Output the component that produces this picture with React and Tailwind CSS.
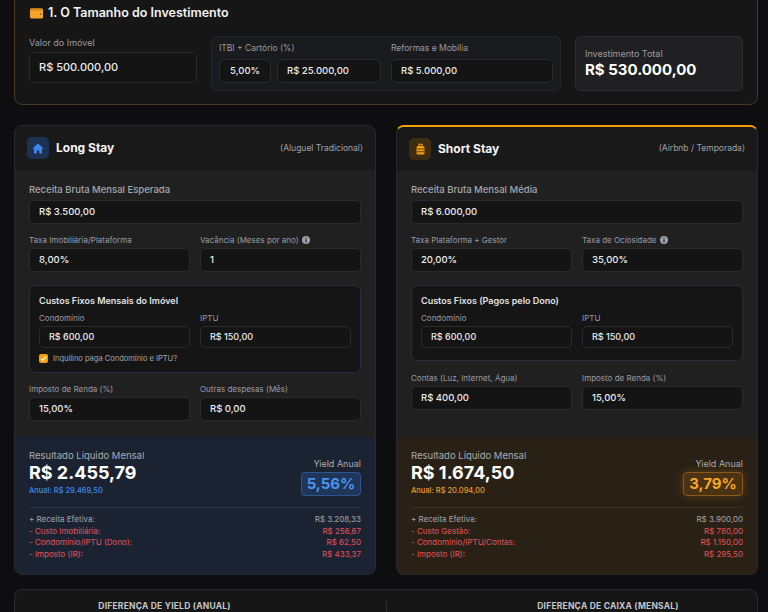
import React from "react";

function WalletIcon() {
  return (
    <svg width="13" height="11" viewBox="0 0 13 11">
      <rect x="0" y="0.5" width="13" height="10" rx="1.6" fill="#f4a42c" />
      <rect x="0" y="0.5" width="13" height="2.2" rx="1.1" fill="#e08c16" />
      <circle cx="10.6" cy="6.2" r="0.8" fill="#7a4506" />
    </svg>
  );
}

function HouseIcon() {
  return (
    <svg width="12" height="11" viewBox="0 0 12 11">
      <path d="M6 0.6 L11.6 5.6 H10 V10.6 H7.3 V7.4 H4.7 V10.6 H2 V5.6 H0.4 Z" fill="#3b86f0" />
    </svg>
  );
}

function SuitcaseIcon() {
  return (
    <svg width="9" height="12" viewBox="0 0 9 12">
      <path d="M3 3.2 V1.2 H6 V3.2" fill="none" stroke="#f59e0b" strokeWidth="1.1" />
      <rect x="0.5" y="3" width="8" height="8.6" rx="1.6" fill="#f59e0b" />
      <rect x="0.5" y="5.6" width="8" height="0.8" fill="#3d2a10" />
      <rect x="0.5" y="8.4" width="8" height="0.8" fill="#3d2a10" />
    </svg>
  );
}

function InfoIcon() {
  return (
    <svg width="8" height="8" viewBox="0 0 8 8" className="ml-[3px] inline-block">
      <circle cx="4" cy="4" r="4" fill="#9aa0a8" />
      <rect x="3.45" y="3.4" width="1.1" height="3" fill="#1f1f20" />
      <rect x="3.45" y="1.6" width="1.1" height="1.1" fill="#1f1f20" />
    </svg>
  );
}

function Label({ children, className = "" }) {
  return <p className={`text-[8px] leading-[10px] text-[#9a9ca2] ${className}`}>{children}</p>;
}

function Input({ value, className = "" }) {
  return (
    <div className={`flex items-center rounded-[5px] border border-[#2b2b2e] bg-[#141415] pl-[9px] font-medium text-[#ececec] ${className}`}>
      {value}
    </div>
  );
}

function Field({ label, value, info }) {
  return (
    <div>
      <Label className="flex items-center">
        {label}
        {info && <InfoIcon />}
      </Label>
      <Input value={value} className="mt-[3px] h-[24px] text-[9.5px]" />
    </div>
  );
}

function FixedCosts({ title, checkbox }) {
  return (
    <div className={`mt-[13px] rounded-md border border-[#2a2d33] bg-[#151516] px-[9px] pt-[9px] ${checkbox ? "pb-[9px]" : "pb-[12px]"}`}>
      <p className="text-[9px] font-semibold leading-[12px] text-[#e2e2e4]">{title}</p>
      <div className="mt-[6px] grid grid-cols-2 gap-[10px]">
        <div>
          <Label>Condomínio</Label>
          <Input value="R$ 600,00" className="mt-[3px] h-[22px] text-[9px]" />
        </div>
        <div>
          <Label>IPTU</Label>
          <Input value="R$ 150,00" className="mt-[3px] h-[22px] text-[9px]" />
        </div>
      </div>
      {checkbox && (
        <div className="mt-[6px] flex h-[9px] items-center gap-[5px]">
          <span className="flex h-[9px] w-[9px] items-center justify-center rounded-[2px] bg-[#f59e0b]">
            <svg width="7" height="7" viewBox="0 0 7 7">
              <path d="M1 3.6 L2.8 5.4 L6 1.4" fill="none" stroke="#ffffff" strokeWidth="1.2" />
            </svg>
          </span>
          <span className="text-[7.5px] text-[#a4a6ab]">Inquilino paga Condomínio e IPTU?</span>
        </div>
      )}
    </div>
  );
}

function Result({ tone, value, annual, yieldValue, rows }) {
  const blue = tone === "blue";
  return (
    <div className={`px-[14px] pb-[13px] pt-[13px] ${blue ? "bg-[#1b2333]" : "bg-[#2a2116]"}`}>
      <div className="flex items-end justify-between">
        <div>
          <p className="text-[9.5px] leading-[12px] text-[#a9abb0]">Resultado Líquido Mensal</p>
          <p className="text-[18px] font-bold leading-[22px] text-white">{value}</p>
          <p className={`mt-[2px] text-[7.5px] font-medium leading-[10px] ${blue ? "text-[#3f8be8]" : "text-[#e99a26]"}`}>
            Anual: {annual}
          </p>
        </div>
        <div className="flex flex-col items-end">
          <p className="text-[9px] leading-[12px] text-[#a9abb0]">Yield Anual</p>
          <div
            className={`mt-[2px] flex h-[24px] w-[60px] items-center justify-center rounded-[4px] border text-[15px] font-bold ${
              blue
                ? "border-[#2c5590] bg-[#1f3659] text-[#4b93ee]"
                : "border-[#8a5a1c] bg-[#4a3213] text-[#f5a623] shadow-[0_0_8px_rgba(245,158,11,0.25)]"
            }`}
          >
            {yieldValue}
          </div>
        </div>
      </div>
      <div className={`mt-[11px] border-t pt-[6px] ${blue ? "border-[#2a3244]" : "border-[#3a2e20]"}`}>
        {rows.map(([k, v], i) => (
          <div
            key={k}
            className={`flex justify-between text-[8px] leading-[11.67px] ${i === 0 ? "text-[#a3a5aa]" : "text-[#e0555a]"}`}
          >
            <span>{k}</span>
            <span>{v}</span>
          </div>
        ))}
      </div>
    </div>
  );
}

function Card({ tone, title, subtitle, icon, children, result }) {
  const blue = tone === "blue";
  return (
    <div
      className={`flex flex-col overflow-hidden rounded-lg border bg-[#202021] ${
        blue ? "border-[#28292c]" : "border-[#28292c] border-t-2 border-t-[#f59e0b]"
      }`}
    >
      <div className={`flex items-center justify-between bg-[#19191a] px-[12px] ${blue ? "h-[44px]" : "h-[43px]"}`}>
        <div className="flex items-center gap-[7px]">
          <div className={`flex h-[22px] w-[22px] items-center justify-center rounded-[5px] ${blue ? "bg-[#1d3152]" : "bg-[#3e2c13]"}`}>
            {icon}
          </div>
          <h2 className="text-[12px] font-bold text-[#f4f4f5]">{title}</h2>
        </div>
        <span className="text-[8.5px] text-[#a0a2a7]">{subtitle}</span>
      </div>
      <div className="flex-1 px-[14px] pb-[16px] pt-[14px]">{children}</div>
      <Result {...result} tone={tone} />
    </div>
  );
}

export default function App() {
  return (
    <div className="h-[612px] overflow-hidden bg-[#0e0e10] font-['Inter',sans-serif]">
      <div className="w-[744px] ml-[14px]">
        <section className="-mt-[10px] rounded-lg border border-[#4a3920] bg-[#161617] px-[14px] pb-[13px] pt-[14px]">
          <h1 className="flex h-4 items-center gap-[5px] pl-px text-[12.5px] font-semibold text-[#f2f2f3]">
            <WalletIcon />
            1. O Tamanho do Investimento
          </h1>
          <div className="mt-[15px] grid grid-cols-4 gap-[14px]">
            <div className="pt-px">
              <p className="text-[9px] leading-[11px] text-[#9a9ca2]">Valor do Imóvel</p>
              <Input value="R$ 500.000,00" className="mt-[4px] h-[31px] text-[11px]" />
            </div>
            <div className="col-span-2 grid grid-cols-2 gap-[10px] rounded-md border border-[#22252a] bg-[#191b1f] px-[7px] pb-[7px] pt-[6px]">
              <div>
                <p className="text-[8.5px] leading-[11px] text-[#9a9ca2]">ITBI + Cartório (%)</p>
                <div className="mt-[5px] flex gap-[6px]">
                  <div className="flex h-[24px] w-[52px] items-center justify-center rounded-[5px] border border-[#2b2b2e] bg-[#141415] text-[9.5px] font-medium text-[#ececec]">
                    5,00%
                  </div>
                  <Input value="R$ 25.000,00" className="h-[24px] flex-1 text-[9.5px]" />
                </div>
              </div>
              <div>
                <p className="text-[8.5px] leading-[11px] text-[#9a9ca2]">Reformas e Mobília</p>
                <Input value="R$ 5.000,00" className="mt-[5px] h-[24px] text-[9.5px]" />
              </div>
            </div>
            <div className="flex flex-col justify-center rounded-md border border-[#2a2d32] bg-[#202022] px-[9px]">
              <p className="text-[9px] leading-[11px] text-[#9a9ca2]">Investimento Total</p>
              <p className="mt-[2px] text-[15px] font-bold leading-[18px] text-white">R$ 530.000,00</p>
            </div>
          </div>
        </section>

        <div className="mt-[20px] grid grid-cols-2 gap-[20px]">
          <Card
            tone="blue"
            title="Long Stay"
            subtitle="(Aluguel Tradicional)"
            icon={<HouseIcon />}
            result={{
              value: "R$ 2.455,79",
              annual: "R$ 29.469,50",
              yieldValue: "5,56%",
              rows: [
                ["+ Receita Efetiva:", "R$ 3.208,33"],
                ["- Custo Imobiliária:", "R$ 256,67"],
                ["- Condomínio/IPTU (Dono):", "R$ 62,50"],
                ["- Imposto (IR):", "R$ 433,37"],
              ],
            }}
          >
            <p className="text-[9.5px] font-medium leading-[12px] text-[#a4a6ab]">Receita Bruta Mensal Esperada</p>
            <Input value="R$ 3.500,00" className="mt-[4px] h-[24px] text-[9.5px]" />
            <div className="mt-[11px] grid grid-cols-2 gap-[10px]">
              <Field label="Taxa Imobiliária/Plataforma" value="8,00%" />
              <Field label="Vacância (Meses por ano)" value="1" info />
            </div>
            <FixedCosts title="Custos Fixos Mensais do Imóvel" checkbox />
            <div className="mt-[11px] grid grid-cols-2 gap-[10px]">
              <Field label="Imposto de Renda (%)" value="15,00%" />
              <Field label="Outras despesas (Mês)" value="R$ 0,00" />
            </div>
          </Card>

          <Card
            tone="orange"
            title="Short Stay"
            subtitle="(Airbnb / Temporada)"
            icon={<SuitcaseIcon />}
            result={{
              value: "R$ 1.674,50",
              annual: "R$ 20.094,00",
              yieldValue: "3,79%",
              rows: [
                ["+ Receita Efetiva:", "R$ 3.900,00"],
                ["- Custo Gestão:", "R$ 780,00"],
                ["- Condomínio/IPTU/Contas:", "R$ 1.150,00"],
                ["- Imposto (IR):", "R$ 295,50"],
              ],
            }}
          >
            <p className="text-[9.5px] font-medium leading-[12px] text-[#a4a6ab]">Receita Bruta Mensal Média</p>
            <Input value="R$ 6.000,00" className="mt-[4px] h-[24px] text-[9.5px]" />
            <div className="mt-[11px] grid grid-cols-2 gap-[10px]">
              <Field label="Taxa Plataforma + Gestor" value="20,00%" />
              <Field label="Taxa de Ociosidade" value="35,00%" info />
            </div>
            <FixedCosts title="Custos Fixos (Pagos pelo Dono)" />
            <div className="mt-[12px] grid grid-cols-2 gap-[10px]">
              <Field label="Contas (Luz, Internet, Água)" value="R$ 400,00" />
              <Field label="Imposto de Renda (%)" value="15,00%" />
            </div>
          </Card>
        </div>

        <section className="mt-[14px] grid grid-cols-2 rounded-lg border border-[#2a2a2d] bg-[#161617] pt-[11px]">
          <div className="pb-[30px] pr-[72px] text-center text-[8.5px] font-bold uppercase leading-[11px] tracking-wide text-[#c4c5c8]">
            Diferença de Yield (Anual)
          </div>
          <div className="border-l border-[#303033] pb-[30px] pl-[72px] text-center text-[8.5px] font-bold uppercase leading-[11px] tracking-wide text-[#c4c5c8]">
            Diferença de Caixa (Mensal)
          </div>
        </section>
      </div>
    </div>
  );
}
